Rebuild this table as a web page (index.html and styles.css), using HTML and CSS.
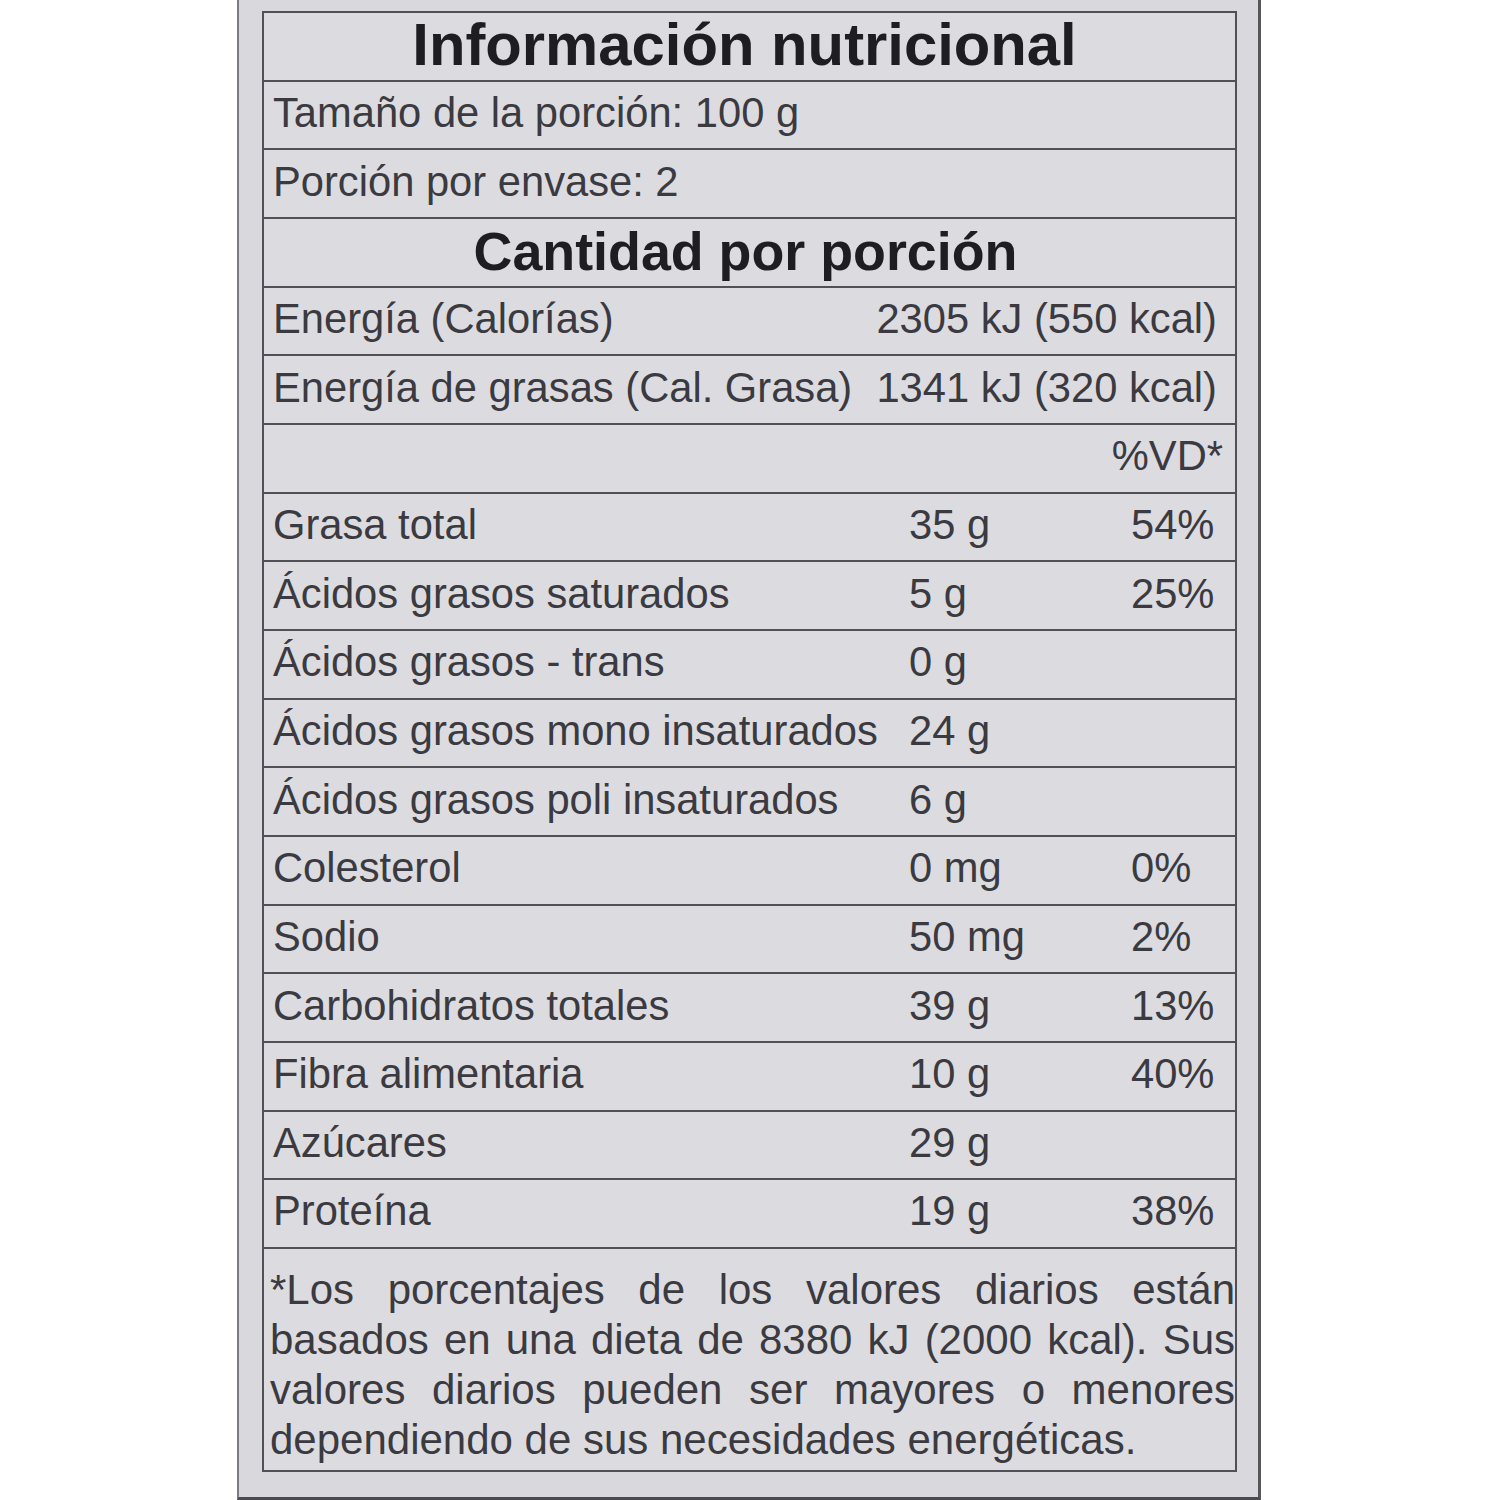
FILE: index.html
```html
<!DOCTYPE html>
<html lang="es">
<head>
<meta charset="utf-8">
<title>Información nutricional</title>
<link rel="stylesheet" href="styles.css">
</head>
<body>
<div class="panel">
  <div class="label">
    <div class="row title">Información nutricional</div>
    <div class="row">Tamaño de la porción: 100 g</div>
    <div class="row">Porción por envase: 2</div>
    <div class="row subtitle">Cantidad por porción</div>
    <div class="row split"><span>Energía (Calorías)</span><span class="right">2305 kJ (550 kcal)</span></div>
    <div class="row split"><span>Energía de grasas (Cal. Grasa)</span><span class="right">1341 kJ (320 kcal)</span></div>
    <div class="row vd"><span>%VD*</span></div>
    <div class="row nut"><span class="name">Grasa total</span><span class="qty">35 g</span><span class="pct">54%</span></div>
    <div class="row nut"><span class="name">Ácidos grasos saturados</span><span class="qty">5 g</span><span class="pct">25%</span></div>
    <div class="row nut"><span class="name">Ácidos grasos - trans</span><span class="qty">0 g</span><span class="pct"></span></div>
    <div class="row nut"><span class="name">Ácidos grasos mono insaturados</span><span class="qty">24 g</span><span class="pct"></span></div>
    <div class="row nut"><span class="name">Ácidos grasos poli insaturados</span><span class="qty">6 g</span><span class="pct"></span></div>
    <div class="row nut"><span class="name">Colesterol</span><span class="qty">0 mg</span><span class="pct">0%</span></div>
    <div class="row nut"><span class="name">Sodio</span><span class="qty">50 mg</span><span class="pct">2%</span></div>
    <div class="row nut"><span class="name">Carbohidratos totales</span><span class="qty">39 g</span><span class="pct">13%</span></div>
    <div class="row nut"><span class="name">Fibra alimentaria</span><span class="qty">10 g</span><span class="pct">40%</span></div>
    <div class="row nut"><span class="name">Azúcares</span><span class="qty">29 g</span><span class="pct"></span></div>
    <div class="row nut"><span class="name">Proteína</span><span class="qty">19 g</span><span class="pct">38%</span></div>
    <div class="footer">*Los porcentajes de los valores diarios están basados en una dieta de 8380 kJ (2000 kcal). Sus valores diarios pueden ser mayores o menores dependiendo de sus necesidades energéticas.</div>
  </div>
</div>
</body>
</html>
```

FILE: styles.css
```css
html, body {
  margin: 0;
  padding: 0;
  background: #ffffff;
}

body {
  width: 1500px;
  height: 1500px;
  overflow: hidden;
  font-family: "Liberation Sans", Arial, sans-serif;
  color: #3a3a40;
}

.panel {
  box-sizing: border-box;
  margin-left: 237px;
  width: 1024px;
  height: 1500px;
  background: #d9d9dd;
  border-left: 2px solid #7a7a82;
  border-right: 3px solid #55555c;
  border-bottom: 3px solid #4a4a50;
  padding: 11px 0 0 23px;
}

.label {
  box-sizing: border-box;
  width: 975px;
  border: 2px solid #505056;
  background: #dcdce0;
}

.row {
  box-sizing: border-box;
  height: 68.67px;
  border-bottom: 2px solid #505056;
  display: flex;
  align-items: center;
  padding: 0 0 4px 9px;
  font-size: 41.7px;
  white-space: nowrap;
}

.title {
  justify-content: center;
  font-weight: bold;
  font-size: 59.8px;
  color: #1e1e22;
  padding: 0 10px 4px 0;
}

.subtitle {
  justify-content: center;
  font-weight: bold;
  font-size: 53.8px;
  color: #1e1e22;
  padding: 0 8px 2px 0;
}

.split {
  justify-content: space-between;
  padding-right: 18px;
}

.vd {
  justify-content: flex-end;
  padding-right: 12px;
}

.nut {
  display: grid;
  grid-template-columns: 636px 222px 1fr;
  align-items: center;
}

.footer {
  box-sizing: border-box;
  height: 221px;
  padding: 16px 0 0 6px;
  font-size: 42px;
  line-height: 50px;
  text-align: justify;
}
```
